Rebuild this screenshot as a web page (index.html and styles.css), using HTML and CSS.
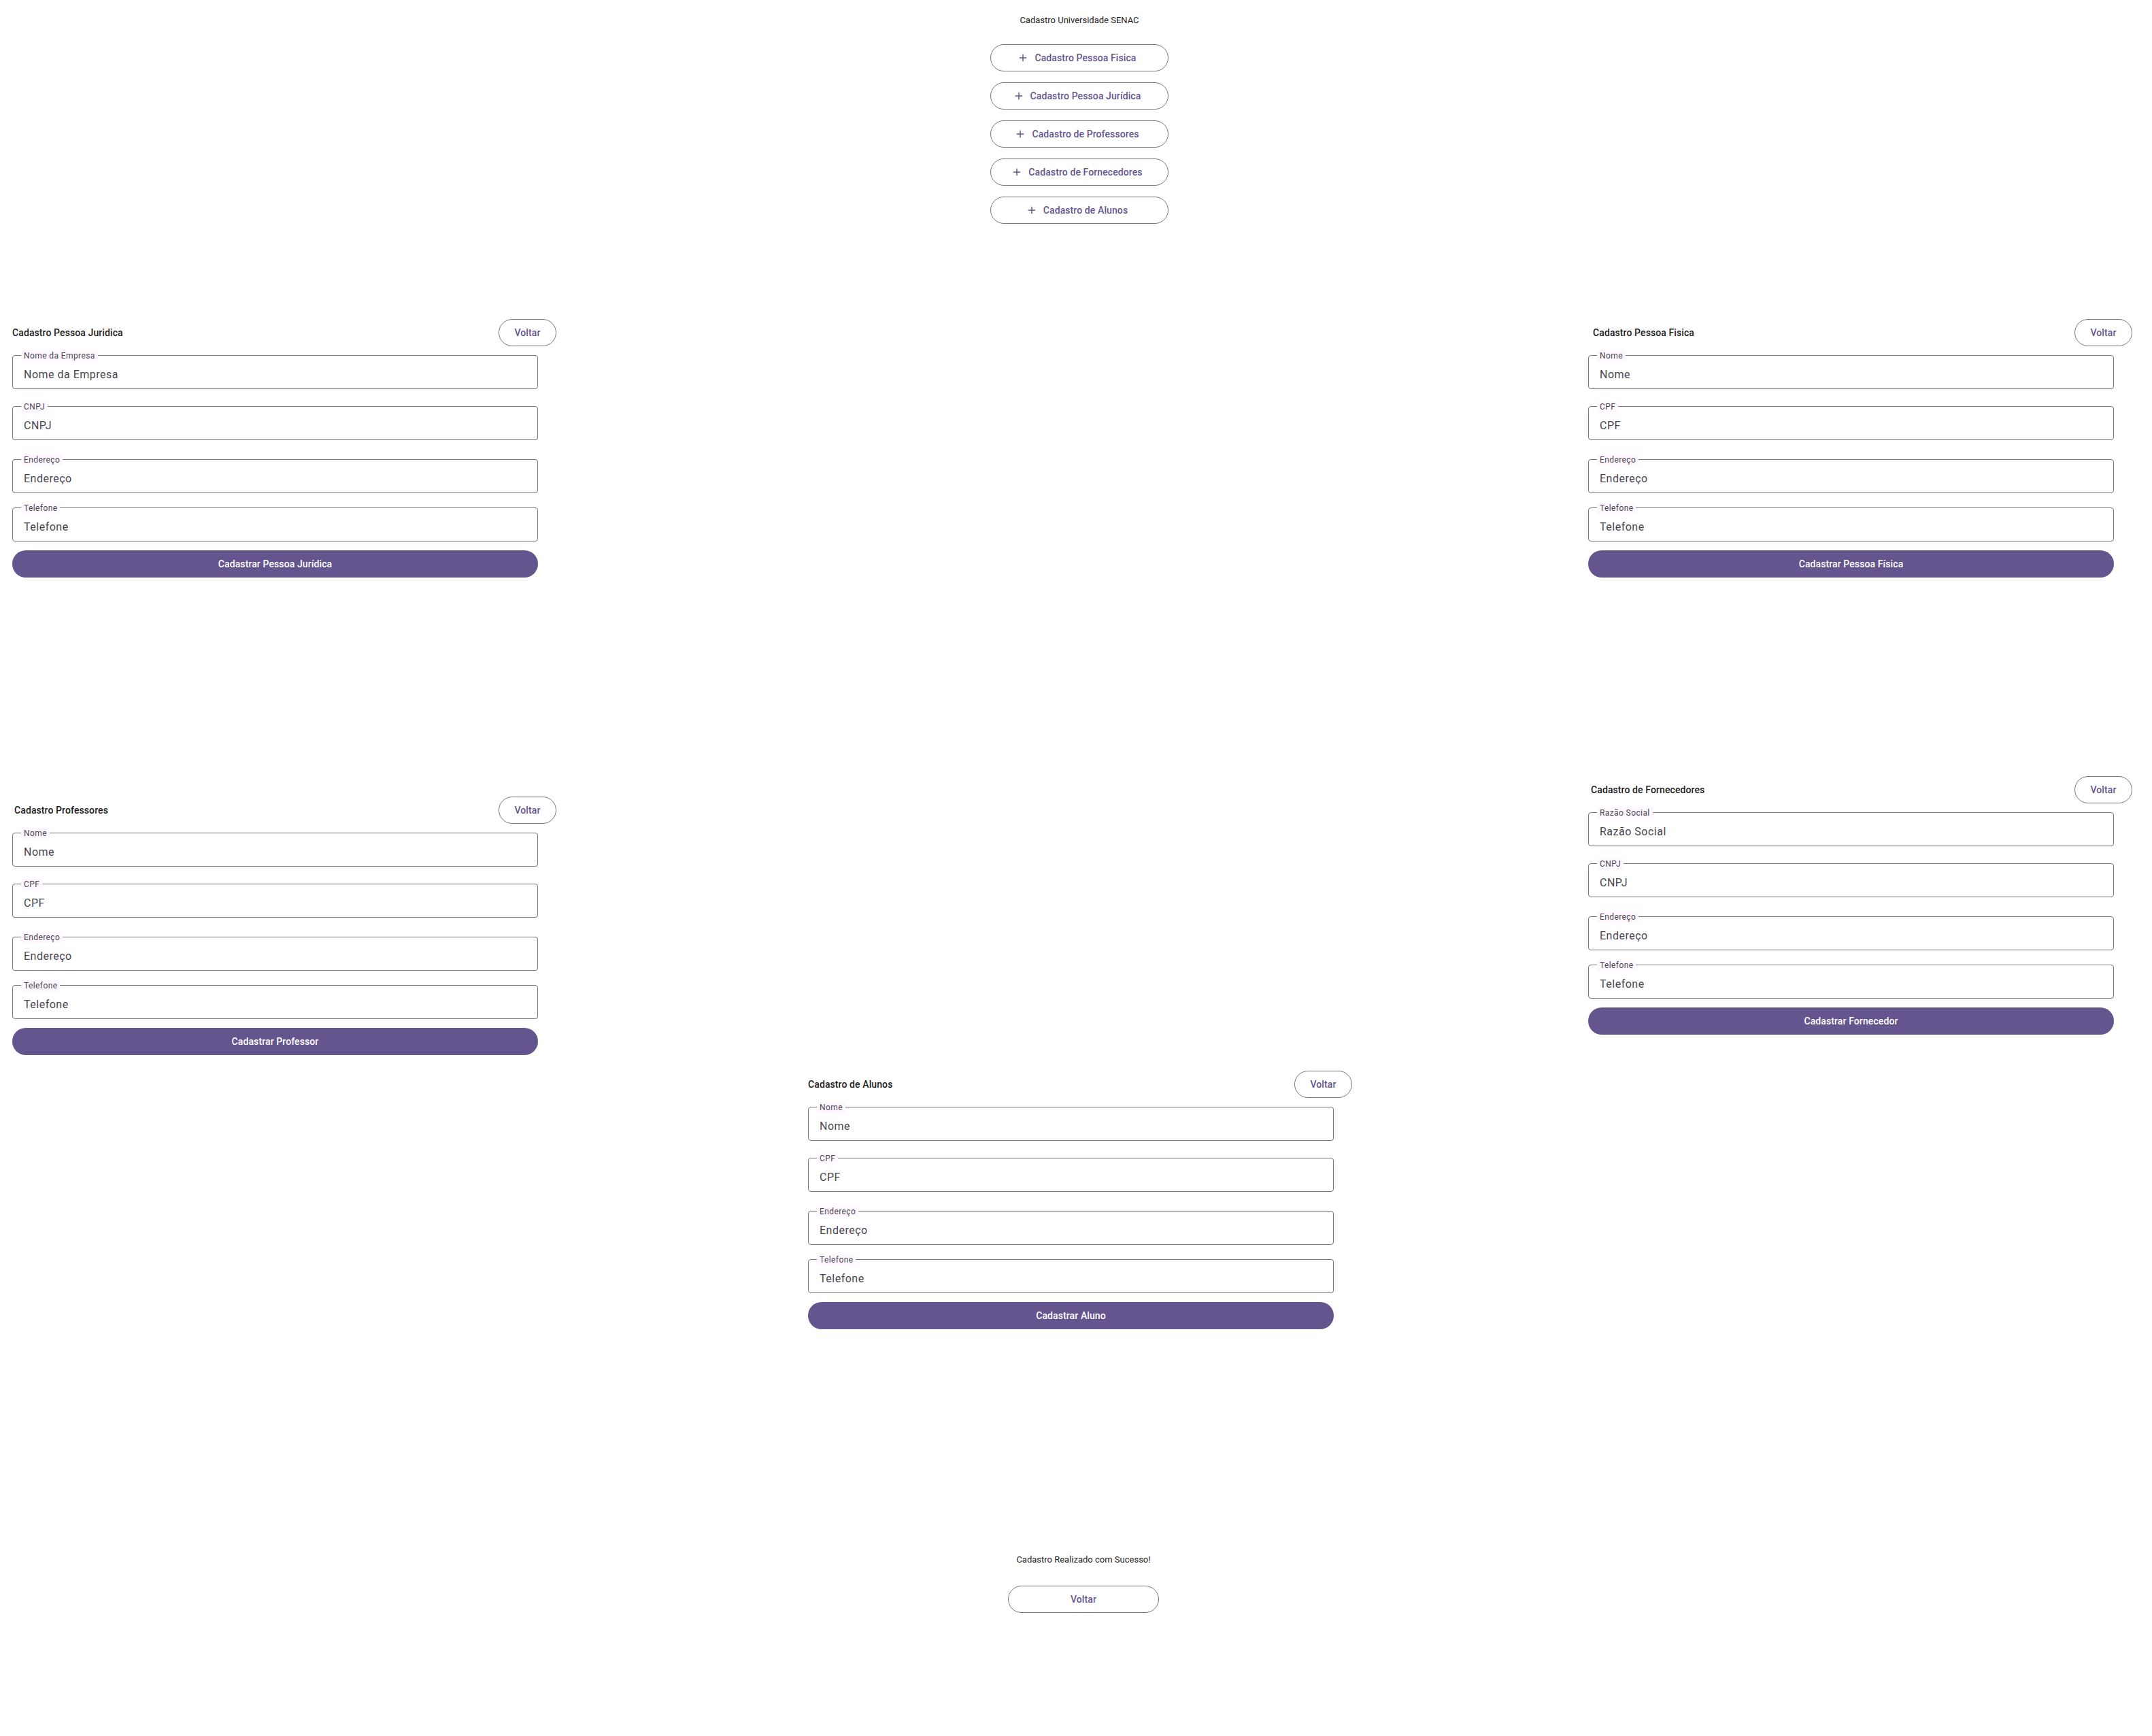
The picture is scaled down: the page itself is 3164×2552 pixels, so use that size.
FILE: index.html
```html
<!DOCTYPE html>
<html lang="pt-BR">
<head>
    <meta charset="UTF-8">
    <meta name="viewport" content="width=device-width, initial-scale=1.0">
    <title>Cadastro Universidade SENAC</title>
    <link rel="stylesheet" href="styles.css">
</head>
<body>
<div class="canvas">

    <!-- tela inicial -->
    <section class="screen menu">
        <p class="screen-text">Cadastro Universidade SENAC</p>
        <nav class="menu-list">
            <button class="btn btn-outline btn-icon"><svg viewBox="0 0 24 24"><path d="M19 13h-6v6h-2v-6H5v-2h6V5h2v6h6v2z"/></svg>Cadastro Pessoa Fisica</button>
            <button class="btn btn-outline btn-icon"><svg viewBox="0 0 24 24"><path d="M19 13h-6v6h-2v-6H5v-2h6V5h2v6h6v2z"/></svg>Cadastro Pessoa Jurídica</button>
            <button class="btn btn-outline btn-icon"><svg viewBox="0 0 24 24"><path d="M19 13h-6v6h-2v-6H5v-2h6V5h2v6h6v2z"/></svg>Cadastro de Professores</button>
            <button class="btn btn-outline btn-icon"><svg viewBox="0 0 24 24"><path d="M19 13h-6v6h-2v-6H5v-2h6V5h2v6h6v2z"/></svg>Cadastro de Fornecedores</button>
            <button class="btn btn-outline btn-icon"><svg viewBox="0 0 24 24"><path d="M19 13h-6v6h-2v-6H5v-2h6V5h2v6h6v2z"/></svg>Cadastro de Alunos</button>
        </nav>
    </section>

    <!-- pessoa juridica -->
    <section class="screen form form-pj">
        <div class="form-head">
            <h2 class="form-title">Cadastro Pessoa Juridica</h2>
            <button class="btn btn-outline btn-back">Voltar</button>
        </div>
        <div class="form-body">
            <div class="field"><label class="field-label" for="pjNome">Nome da Empresa</label><input class="field-input" id="pjNome" placeholder="Nome da Empresa"></div>
            <div class="field"><label class="field-label" for="pjCnpj">CNPJ</label><input class="field-input" id="pjCnpj" placeholder="CNPJ"></div>
            <div class="field"><label class="field-label" for="pjEnd">Endereço</label><input class="field-input" id="pjEnd" placeholder="Endereço"></div>
            <div class="field"><label class="field-label" for="pjTel">Telefone</label><input class="field-input" id="pjTel" placeholder="Telefone"></div>
            <button class="btn btn-filled">Cadastrar Pessoa Jurídica</button>
        </div>
    </section>

    <!-- pessoa fisica -->
    <section class="screen form form-pf">
        <div class="form-head">
            <h2 class="form-title">Cadastro Pessoa Fisica</h2>
            <button class="btn btn-outline btn-back">Voltar</button>
        </div>
        <div class="form-body">
            <div class="field"><label class="field-label" for="pfNome">Nome</label><input class="field-input" id="pfNome" placeholder="Nome"></div>
            <div class="field"><label class="field-label" for="pfCpf">CPF</label><input class="field-input" id="pfCpf" placeholder="CPF"></div>
            <div class="field"><label class="field-label" for="pfEnd">Endereço</label><input class="field-input" id="pfEnd" placeholder="Endereço"></div>
            <div class="field"><label class="field-label" for="pfTel">Telefone</label><input class="field-input" id="pfTel" placeholder="Telefone"></div>
            <button class="btn btn-filled">Cadastrar Pessoa Física</button>
        </div>
    </section>

    <!-- professores -->
    <section class="screen form form-prof">
        <div class="form-head">
            <h2 class="form-title">Cadastro Professores</h2>
            <button class="btn btn-outline btn-back">Voltar</button>
        </div>
        <div class="form-body">
            <div class="field"><label class="field-label" for="prNome">Nome</label><input class="field-input" id="prNome" placeholder="Nome"></div>
            <div class="field"><label class="field-label" for="prCpf">CPF</label><input class="field-input" id="prCpf" placeholder="CPF"></div>
            <div class="field"><label class="field-label" for="prEnd">Endereço</label><input class="field-input" id="prEnd" placeholder="Endereço"></div>
            <div class="field"><label class="field-label" for="prTel">Telefone</label><input class="field-input" id="prTel" placeholder="Telefone"></div>
            <button class="btn btn-filled">Cadastrar Professor</button>
        </div>
    </section>

    <!-- fornecedores -->
    <section class="screen form form-forn">
        <div class="form-head">
            <h2 class="form-title">Cadastro de Fornecedores</h2>
            <button class="btn btn-outline btn-back">Voltar</button>
        </div>
        <div class="form-body">
            <div class="field"><label class="field-label" for="foRazao">Razão Social</label><input class="field-input" id="foRazao" placeholder="Razão Social"></div>
            <div class="field"><label class="field-label" for="foCnpj">CNPJ</label><input class="field-input" id="foCnpj" placeholder="CNPJ"></div>
            <div class="field"><label class="field-label" for="foEnd">Endereço</label><input class="field-input" id="foEnd" placeholder="Endereço"></div>
            <div class="field"><label class="field-label" for="foTel">Telefone</label><input class="field-input" id="foTel" placeholder="Telefone"></div>
            <button class="btn btn-filled">Cadastrar Fornecedor</button>
        </div>
    </section>

    <!-- alunos -->
    <section class="screen form form-aluno">
        <div class="form-head">
            <h2 class="form-title">Cadastro de Alunos</h2>
            <button class="btn btn-outline btn-back">Voltar</button>
        </div>
        <div class="form-body">
            <div class="field"><label class="field-label" for="alNome">Nome</label><input class="field-input" id="alNome" placeholder="Nome"></div>
            <div class="field"><label class="field-label" for="alCpf">CPF</label><input class="field-input" id="alCpf" placeholder="CPF"></div>
            <div class="field"><label class="field-label" for="alEnd">Endereço</label><input class="field-input" id="alEnd" placeholder="Endereço"></div>
            <div class="field"><label class="field-label" for="alTel">Telefone</label><input class="field-input" id="alTel" placeholder="Telefone"></div>
            <button class="btn btn-filled">Cadastrar Aluno</button>
        </div>
    </section>

    <!-- sucesso -->
    <section class="screen done">
        <p class="screen-text">Cadastro Realizado com Sucesso!</p>
        <button class="btn btn-outline btn-done">Voltar</button>
    </section>

</div>
</body>
</html>
```

FILE: styles.css
```css
:root {
    --primary: #65558F;
    --outline: #79747E;
    --on-surface: #1D1B20;
    --on-surface-variant: #49454F;
    --surface: #FEF7FF;
}

body {
    margin: 0;
    background: #ffffff;
    color: var(--on-surface);
    font-family: Roboto, 'Liberation Sans', sans-serif;
}

/* cada tela fica no seu lugar do quadro */
.canvas {
    position: relative;
    width: 3164px;
    height: 2552px;
}

.screen {
    position: absolute;
}

.screen-text {
    margin: 0;
    font-size: 13px;
    line-height: 20px;
}

/* botoes */
.btn {
    box-sizing: border-box;
    display: flex;
    align-items: center;
    justify-content: center;
    height: 40px;
    padding: 0 24px;
    border-radius: 20px;
    font-family: inherit;
    font-size: 14px;
    font-weight: 500;
    letter-spacing: 0.1px;
    cursor: pointer;
}

.btn-outline {
    background: #ffffff;
    border: 1px solid var(--outline);
    color: var(--primary);
}

.btn-filled {
    border: 0;
    background: var(--primary);
    color: #ffffff;
}

.btn-icon {
    gap: 8px;
    padding: 0 24px 0 16px;
}

.btn-icon svg {
    width: 18px;
    height: 18px;
    fill: var(--primary);
}

/* menu */
.menu {
    left: 1456px;
    top: 20px;
    width: 262px;
    display: flex;
    flex-direction: column;
    align-items: center;
}

.menu-list {
    display: flex;
    flex-direction: column;
    gap: 16px;
    width: 100%;
    margin-top: 25px;
}

/* formularios */
.form {
    width: 800px;
}

.form-pj    { left: 18px;   top: 469px; }
.form-pf    { left: 2335px; top: 469px; }
.form-prof  { left: 18px;   top: 1171px; }
.form-forn  { left: 2335px; top: 1141px; }
.form-aluno { left: 1188px; top: 1574px; }

.form-head {
    display: flex;
    align-items: center;
    justify-content: space-between;
    height: 40px;
}

.form-title {
    margin: 0;
    font-size: 14px;
    font-weight: 500;
    line-height: 20px;
    letter-spacing: 0.1px;
}

.form-pf .form-title   { padding-left: 7px; }
.form-prof .form-title { padding-left: 3px; }
.form-forn .form-title { padding-left: 4px; }

.btn-back {
    width: 85px;
    padding: 0;
}

.form-body {
    display: flex;
    flex-direction: column;
    width: 773px;
}

.field {
    position: relative;
    box-sizing: border-box;
    display: flex;
    align-items: center;
    height: 50px;
    padding: 8px 16px 0;
    border: 1px solid var(--outline);
    border-radius: 4px;
}

.field:nth-child(1) { margin-top: 13px; }
.field:nth-child(2) { margin-top: 25px; }
.field:nth-child(3) { margin-top: 28px; }
.field:nth-child(4) { margin-top: 21px; }

.form-body .btn-filled {
    margin-top: 13px;
    width: 100%;
}

.field-label {
    position: absolute;
    left: 12px;
    top: -8px;
    padding: 0 4px;
    background: var(--surface);
    color: var(--on-surface-variant);
    font-size: 12px;
    line-height: 16px;
    letter-spacing: 0.4px;
}

.field-input {
    width: 100%;
    padding: 0;
    border: 0;
    outline: 0;
    background: transparent;
    color: var(--on-surface);
    font-family: inherit;
    font-size: 16px;
    line-height: 24px;
    letter-spacing: 0.5px;
}

.field-input::placeholder {
    color: var(--on-surface-variant);
    opacity: 1;
}

/* tela de sucesso */
.done {
    left: 1482px;
    top: 2283px;
    width: 222px;
    display: flex;
    flex-direction: column;
    align-items: center;
    gap: 28px;
}

.btn-done {
    width: 100%;
}
```
